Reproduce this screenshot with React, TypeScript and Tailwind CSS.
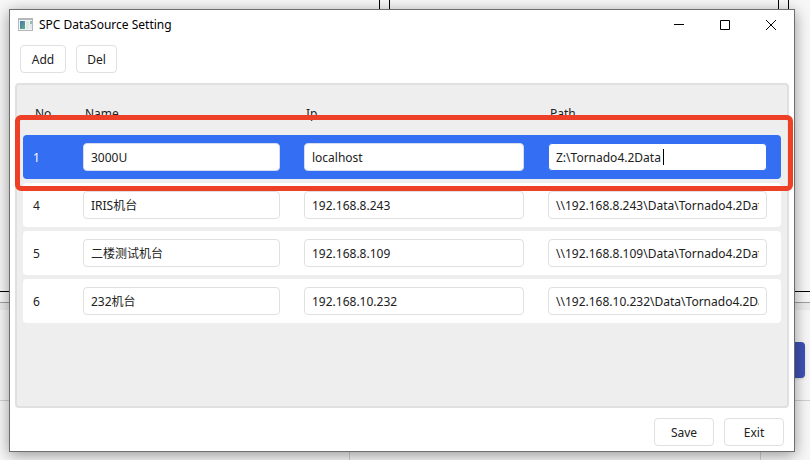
import { useState } from "react";

type Source = { no: number; name: string; ip: string; path: string };

const initial: Source[] = [
  { no: 1, name: "3000U", ip: "localhost", path: "Z:\\Tornado4.2Data" },
  { no: 4, name: "IRIS机台", ip: "192.168.8.243", path: "\\\\192.168.8.243\\Data\\Tornado4.2Data" },
  { no: 5, name: "二楼测试机台", ip: "192.168.8.109", path: "\\\\192.168.8.109\\Data\\Tornado4.2Data" },
  { no: 6, name: "232机台", ip: "192.168.10.232", path: "\\\\192.168.10.232\\Data\\Tornado4.2Data" },
];

const button = "h-7 rounded-[4px] border border-[#e0e0e0] bg-white pt-0.5 text-center hover:bg-gray-50";

function AppIcon() {
  return (
    <svg width="15" height="13" viewBox="0 0 15 13" aria-hidden="true" shapeRendering="crispEdges">
      <defs>
        <linearGradient id="pane" x1="0" y1="0" x2="1" y2="1">
          <stop offset="0" stopColor="#4778b0" />
          <stop offset="1" stopColor="#5fae80" />
        </linearGradient>
      </defs>
      <rect width="15" height="13" fill="#b4b7ba" />
      <rect x="1" y="2" width="13" height="10" fill="#f4f5f6" />
      <rect x="2" y="3" width="5" height="8" fill="url(#pane)" />
      <rect x="8" y="3" width="3" height="8" fill="#e4e6e8" />
      <rect x="12" y="3" width="2" height="3" fill="#8fc0a8" />
      <rect x="12" y="6" width="2" height="5" fill="#e4e6e8" />
    </svg>
  );
}

/** The main application that stays visible around the dialog. */
function Backdrop() {
  return (
    <div className="absolute inset-0 -z-10 flex flex-col bg-[#f7f7f7]" aria-hidden="true">
      <div className="flex h-[292px] gap-[9px] border-b border-black">
        <div className="w-[380px] border-r border-black" />
        <div className="w-[390px] border-x border-black" />
        <div className="flex-1 border-l border-black" />
      </div>
      <div className="h-[11px] border-b border-[#a0a0a0]" />
      <div className="h-[7px] bg-[#ececec]" />
      <div className="flex h-[91px] justify-end border-b border-[#d0d0d0] pt-8 pr-[5px]">
        <div className="h-9 w-20 rounded-[4px] bg-[#3f51b5] shadow" />
      </div>
      <div className="flex flex-1">
        <div className="w-[350px] border-r border-[#d0d0d0]" />
        <div className="w-[411px] border-r border-[#d0d0d0]" />
      </div>
    </div>
  );
}

function Field({ label, value, active = false, caret = false, onChange }: {
  label: string;
  value: string;
  active?: boolean;
  caret?: boolean;
  onChange: (v: string) => void;
}) {
  return (
    <div className="relative">
      <input
        type="text"
        aria-label={label}
        value={value}
        onChange={(e) => onChange(e.target.value)}
        className={`block h-7 w-full rounded-[4px] border bg-white px-[7px] text-[#212121] outline-none ${
          caret ? "border-[#336ef3]" : active ? "border-[#d5dcf0]" : "border-[#e0e0e0]"
        }`}
      />
      {caret && <span className="absolute top-1.5 left-[115px] h-4 w-px bg-black" />}
    </div>
  );
}

export default function App() {
  const [rows, setRows] = useState(initial);
  const [selected, setSelected] = useState(1);

  const update = (no: number, key: "name" | "ip" | "path", v: string) =>
    setRows(rows.map((r) => (r.no === no ? { ...r, [key]: v } : r)));

  return (
    <div className="relative isolate flex h-screen overflow-hidden pt-[9px] pr-3 pb-2 pl-[9px] font-['Noto_Sans','Noto_Sans_CJK_SC',sans-serif] text-[12px] leading-4 text-[#212121]">
      <div className="relative mr-[3px] flex flex-1 flex-col border border-[#6e6e6e] bg-white shadow-[0_3px_14px_rgba(0,0,0,0.4)]">
        <header className="flex h-[29px] items-center pl-2 text-black">
          <AppIcon />
          <h1 className="ml-1.5 flex-1">SPC DataSource Setting</h1>
          <button aria-label="Minimize" className="flex h-full w-[46px] items-center justify-center">
            <svg width="10" height="10" stroke="#000"><path d="M0 4.5h10" /></svg>
          </button>
          <button aria-label="Maximize" className="flex h-full w-[46px] items-center justify-center">
            <svg width="10" height="10" fill="none" stroke="#000"><path d="M.5.5h9v9h-9z" /></svg>
          </button>
          <button aria-label="Close" className="flex h-full w-[46px] items-center justify-center">
            <svg width="10" height="10" stroke="#000"><path d="M0 0l10 10M10 0L0 10" /></svg>
          </button>
        </header>

        <div className="flex gap-2.5 px-2.5 pt-1.5 pb-2.5">
          <button className={`${button} w-[46px]`}>Add</button>
          <button className={`${button} w-[41px]`}>Del</button>
        </div>

        <main className="relative mx-[5px] flex-1 rounded-[4px] border-2 border-[#e0e0e0] bg-[#eeeeee] px-1.5 pt-2">
          <table className="w-full table-fixed border-separate border-spacing-x-0 border-spacing-y-1">
            <colgroup>
              <col className="w-[60px]" />
              <col className="w-[221px]" />
              <col className="w-[244px]" />
              <col />
            </colgroup>
            <thead>
              <tr className="h-[34px] text-left">
                <th className="p-0 pl-3 font-normal">No</th>
                <th className="p-0 pl-0.5 font-normal">Name</th>
                <th className="p-0 pl-0.5 font-normal">Ip</th>
                <th className="p-0 pl-0.5 font-normal">Path</th>
              </tr>
            </thead>
            <tbody>
              {rows.map((r) => {
                const active = r.no === selected;
                return (
                  <tr
                    key={r.no}
                    onClick={() => setSelected(r.no)}
                    className={`h-11 ${active ? "bg-[#336ef3] text-white" : "bg-white"}`}
                  >
                    <td className="rounded-l-[4px] p-0 pt-0.5 pl-2.5">{r.no}</td>
                    <td className="p-0 pr-6">
                      <Field label="Name" value={r.name} active={active} onChange={(v) => update(r.no, "name", v)} />
                    </td>
                    <td className="p-0 pr-6">
                      <Field label="Ip" value={r.ip} active={active} onChange={(v) => update(r.no, "ip", v)} />
                    </td>
                    <td className="rounded-r-[4px] p-0 pr-3.5">
                      <Field label="Path" value={r.path} active={active} caret={active} onChange={(v) => update(r.no, "path", v)} />
                    </td>
                  </tr>
                );
              })}
            </tbody>
          </table>
          <div className="pointer-events-none absolute top-[30px] -right-1.5 -left-0.5 h-[76px] rounded-[6px] border-5 border-[#ee4026]" />
        </main>

        <footer className="flex justify-end gap-2.5 px-2.5 pt-2.5 pb-[5px]">
          <button className={`${button} w-[60px]`}>Save</button>
          <button className={`${button} w-[60px]`}>Exit</button>
        </footer>
      </div>
      <Backdrop />
    </div>
  );
}
